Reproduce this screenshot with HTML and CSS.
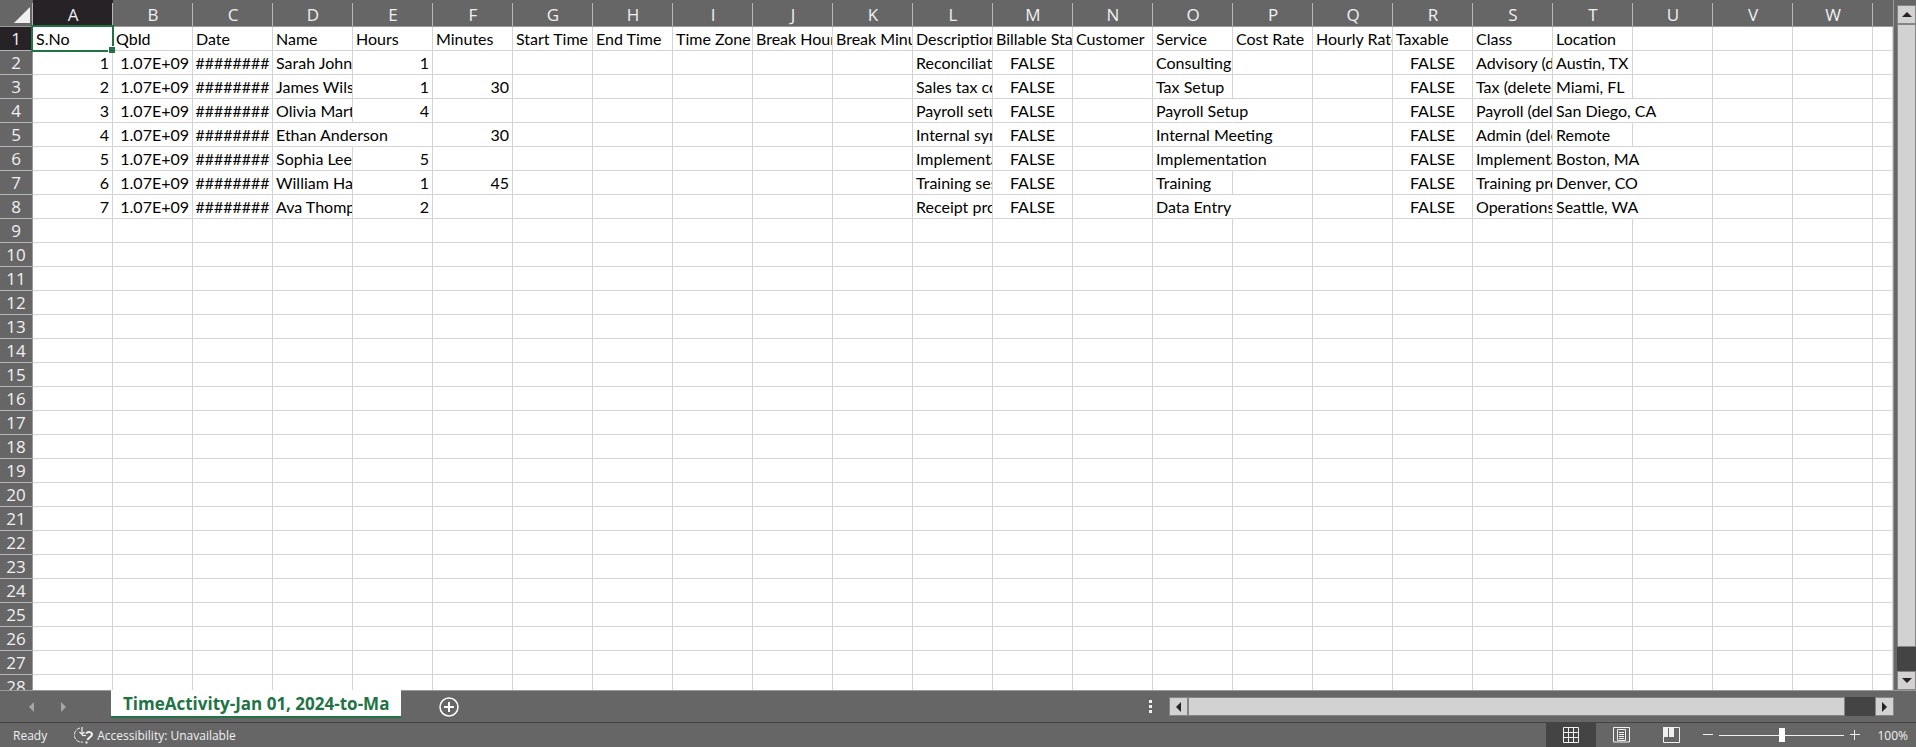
FILE: index.html
```html
<!DOCTYPE html>
<html lang="en">
<head>
  <meta charset="UTF-8">
  <meta name="viewport" content="width=device-width, initial-scale=1.0">
  <title>TimeActivity</title>
  <link rel="stylesheet" href="styles.css">
</head>
<body>
  <!-- Sheet -->
  <main class="workspace">
    <div class="grid">
      <table class="sheet">
        <colgroup id="columns"></colgroup>
        <thead>
          <tr id="letters"></tr>
        </thead>
        <tbody id="rows"></tbody>
      </table>
    </div>
    <div class="vscroll">
      <button class="scroll-btn" aria-label="Scroll up">
        <svg width="10" height="6" viewBox="0 0 10 6"><path d="M5 0L10 5H0z"/></svg>
      </button>
      <div class="vthumb"></div>
      <div class="vtrack"></div>
      <button class="scroll-btn" aria-label="Scroll down">
        <svg width="10" height="6" viewBox="0 0 10 6"><path d="M0 0H10L5 5z"/></svg>
      </button>
    </div>
  </main>

  <!-- Sheet tabs -->
  <nav class="tabs">
    <div class="tab-nav">
      <button class="nav-btn" aria-label="Previous sheet">
        <svg width="6" height="10" viewBox="0 0 6 10"><path d="M5 0V10L0 5z"/></svg>
      </button>
      <button class="nav-btn" aria-label="Next sheet">
        <svg width="6" height="10" viewBox="0 0 6 10"><path d="M0 0V10L5 5z"/></svg>
      </button>
    </div>
    <button class="tab">TimeActivity-Jan 01, 2024-to-Ma</button>
    <button class="add-btn" aria-label="New sheet">
      <svg width="20" height="20" viewBox="0 0 20 20" fill="none" stroke="#fff">
        <circle cx="10" cy="10" r="9" stroke-width="1.5"/>
        <path d="M10 5V15M5 10H15" stroke-width="2"/>
      </svg>
    </button>
    <div class="hscroll-area">
      <svg width="3" height="13" viewBox="0 0 3 13" fill="#f0f0f0"><path d="M0 0h3v3H0zM0 5h3v3H0zM0 10h3v3H0z"/></svg>
      <div class="hscroll">
        <button class="scroll-btn" aria-label="Scroll left">
          <svg width="6" height="10" viewBox="0 0 6 10"><path d="M5 0V10L0 5z"/></svg>
        </button>
        <div class="hthumb"></div>
        <div class="htrack"></div>
        <button class="scroll-btn" aria-label="Scroll right">
          <svg width="6" height="10" viewBox="0 0 6 10"><path d="M0 0V10L5 5z"/></svg>
        </button>
      </div>
    </div>
  </nav>

  <!-- Status bar -->
  <footer class="status">
    <span>Ready</span>
    <button class="access">
      <svg width="20" height="18" viewBox="0 0 20 18" fill="none" stroke="#f0f0f0">
        <path d="M6 2A7 7 0 0 0 9 16" stroke-dasharray="4 1"/>
        <path d="M8 1v7M5.500 6L8 8.500 10.500 6" stroke-width="1.200"/>
        <path d="M8 9.500h4" stroke-width="1.200"/>
        <path d="M12 7.500C14 5 18 6 18 8.500 18 11 14.500 11 13.500 14" stroke-width="2"/>
        <path d="M12.500 15.500v2" stroke-width="2"/>
      </svg>
      Accessibility: Unavailable
    </button>
    <div class="views">
      <button class="view active" aria-label="Normal">
        <svg width="16" height="16" viewBox="0 0 16 16" fill="none" stroke="#f0f0f0"><path d="M.5.5h15v15H.5zM5.5 0v16M10.5 0v16M0 5.5h16M0 10.5h16"/></svg>
      </button>
      <button class="view" aria-label="Page layout">
        <svg width="17" height="16" viewBox="0 0 17 16" fill="none" stroke="#f0f0f0"><path d="M.5.5h16v14.500H.5zM4.500 2.500h8v11h-8zM6 5.500h5M6 7.500h5M6 9.500h5M6 11.500h5"/></svg>
      </button>
      <button class="view" aria-label="Page break preview">
        <svg width="17" height="16" viewBox="0 0 17 16" fill="none" stroke="#f0f0f0"><path d="M.5.5h16v15H.5z"/><path d="M0 0h5v10H0zM6 0h5v10H6z" fill="#f0f0f0" stroke="none"/></svg>
      </button>
    </div>
    <div class="zoom">
      <button class="zoom-btn" aria-label="Zoom out">
        <svg width="10" height="10" viewBox="0 0 10 10" stroke="#f0f0f0"><path d="M0 4.500h10"/></svg>
      </button>
      <input class="slider" type="range" min="0" max="200" value="100" aria-label="Zoom">
      <button class="zoom-btn" aria-label="Zoom in">
        <svg width="10" height="10" viewBox="0 0 10 10" stroke="#f0f0f0"><path d="M0 4.500h10M4.500 0v10"/></svg>
      </button>
      <span class="percent">100%</span>
    </div>
  </footer>

  <script src="script.js"></script>
</body>
</html>
```
FILE: styles.css
```css
* {
  box-sizing: border-box;
}
body {
  display: flex;
  flex-direction: column;
  margin: 0;
  height: 100vh;
  overflow: hidden;
  background-color: #666;
  color: #f0f0f0;
  font-family: "Open Sans", "Noto Sans", sans-serif;
}
button {
  display: flex;
  align-items: center;
  justify-content: center;
  margin: 0;
  padding: 0;
  border: none;
  background: none;
  color: inherit;
  font: inherit;
}
.workspace {
  display: flex;
  flex: 1;
  min-height: 0;
}

/* Grid */
.grid {
  flex: 1;
  overflow: hidden;
  border-right: 1px solid #999;
}
.sheet {
  table-layout: fixed;
  width: 100%;
  border-collapse: separate;
  border-spacing: 0;
}
.col-num {
  width: 33px;
}
.col {
  width: 80px;
}
.sheet th {
  padding: 0;
  overflow: hidden;
  background-color: #666;
  font-size: 17px;
  font-weight: 400;
  line-height: 23px;
  text-align: center;
}
.sheet thead th {
  height: 27px;
  padding-top: 3px;
  border-bottom: 1px solid #999;
  background-image: linear-gradient(#b5b5b5, #b5b5b5);
  background-position: right 3px;
  background-size: 1px 100%;
  background-repeat: no-repeat;
}
.sheet thead th:last-child {
  background-image: none;
}
.sheet thead .corner {
  padding: 0 3px 3px 0;
  vertical-align: bottom;
}
.corner svg {
  display: block;
  margin-left: auto;
}
.sheet tbody th {
  height: 24px;
  border-right: 1px solid #999;
  border-bottom: 1px solid #b5b5b5;
}
.sheet thead th.current,
.sheet tbody th.current {
  background-color: #262226;
}
.sheet td {
  height: 24px;
  padding: 0 3px;
  overflow: hidden;
  border-right: 1px solid #d4d4d4;
  border-bottom: 1px solid #d4d4d4;
  color: #000;
  font-family: Lato, "Open Sans", sans-serif;
  font-size: 16px;
  line-height: 23px;
  white-space: nowrap;
}
.sheet tbody {
  background-color: #fff;
}
.sheet td.number {
  text-align: right;
}
.sheet td.flag {
  text-align: center;
}
.sheet td.hash {
  padding: 0;
  text-align: center;
}
.sheet td.spill {
  overflow: visible;
  border-right-color: transparent;
}
.sheet td.selected {
  position: relative;
  overflow: visible;
}
.selected::before {
  content: "";
  position: absolute;
  inset: -2px;
  border: 2px solid #217346;
}
.selected::after {
  content: "";
  position: absolute;
  right: -3px;
  bottom: -3px;
  width: 6px;
  height: 6px;
  border-top: 1px solid #fff;
  border-left: 1px solid #fff;
  background-color: #217346;
}

/* Scroll bars */
.scroll-btn {
  flex: none;
  width: 19px;
  height: 19px;
  border: 1px solid #858585;
  background-color: #d2d2d2;
  fill: #262226;
}
.vscroll {
  display: flex;
  flex-direction: column;
  margin-left: 3px;
  padding-top: 5px;
}
.vthumb {
  flex: 1;
  border: 1px solid #858585;
  background-color: #d2d2d2;
}
.vtrack {
  height: 24px;
  background-color: #444;
}
.hscroll {
  display: flex;
  flex: 1;
}
.hthumb {
  flex: 1;
  border: 1px solid #858585;
  background-color: #d2d2d2;
}
.htrack {
  width: 30px;
  background-color: #444;
}

/* Sheet tabs */
.tabs {
  display: flex;
  align-items: flex-start;
  height: 32px;
  border-top: 1px solid #999;
}
.tab-nav {
  display: flex;
  gap: 26px;
  width: 111px;
  padding: 11px 0 0 29px;
}
.nav-btn {
  height: 10px;
  fill: #a6a6a6;
}
.tab {
  height: 28px;
  margin-top: -1px;
  padding: 0 12px;
  border-bottom: 2px solid #217346;
  background-color: #fff;
  color: #217346;
  font-size: 17px;
  font-weight: 700;
}
.add-btn {
  margin: 6px 0 0 38px;
}
.hscroll-area {
  display: flex;
  align-items: center;
  gap: 17px;
  width: 745px;
  margin: 6px 22px 0 auto;
}

/* Status bar */
.status {
  display: flex;
  align-items: center;
  height: 25px;
  padding-left: 13px;
  border-top: 1px solid #444;
  font-size: 12px;
}
.access {
  gap: 3px;
  margin-left: 27px;
}
.views {
  display: flex;
  height: 100%;
  margin-left: auto;
}
.view {
  width: 50px;
  height: 100%;
}
.view.active {
  background-color: #444;
}
.zoom {
  display: flex;
  align-items: center;
  padding: 0 8px 0 7px;
}
.slider {
  appearance: none;
  width: 125px;
  height: 14px;
  margin: 0 6px;
  background: linear-gradient(#f0f0f0, #f0f0f0) center / 100% 1px no-repeat;
}
.slider::-webkit-slider-thumb {
  appearance: none;
  width: 6px;
  height: 14px;
  background-color: #fff;
}
.percent {
  margin-left: 17px;
}
```
FILE: script.js
```javascript
const letters = 'ABCDEFGHIJKLMNOPQRSTUVW'.split('');
const rowCount = 28;

const titles = ['S.No', 'QbId', 'Date', 'Name', 'Hours', 'Minutes', 'Start Time', 'End Time',
  'Time Zone', 'Break Hours', 'Break Minutes', 'Description', 'Billable Status', 'Customer',
  'Service', 'Cost Rate', 'Hourly Rate', 'Taxable', 'Class', 'Location'];

// name, hours, minutes, description, service, class, location
const entries = [
  ['Sarah Johnson', 1, '', 'Reconciliation', 'Consulting', 'Advisory (deleted)', 'Austin, TX'],
  ['James Wilson', 1, 30, 'Sales tax config', 'Tax Setup', 'Tax (deleted)', 'Miami, FL'],
  ['Olivia Martin', 4, '', 'Payroll setup', 'Payroll Setup', 'Payroll (deleted)', 'San Diego, CA'],
  ['Ethan Anderson', '', 30, 'Internal sync', 'Internal Meeting', 'Admin (deleted)', 'Remote'],
  ['Sophia Lee', 5, '', 'Implementation', 'Implementation', 'Implementation', 'Boston, MA'],
  ['William Harris', 1, 45, 'Training session', 'Training', 'Training program', 'Denver, CO'],
  ['Ava Thompson', 2, '', 'Receipt processing', 'Data Entry', 'Operations', 'Seattle, WA']
];

// Cells whose text runs on over the empty neighbour
const spills = ['O4', 'T4', 'D5', 'O5', 'O6', 'T6', 'T7', 'O8', 'T8'];

const sheet = [titles];
entries.forEach((e, i) => {
  sheet.push([i + 1, '1.07E+09', '########', e[0], e[1], e[2], '', '', '', '', '', e[3],
    'FALSE', '', e[4], '', '', 'FALSE', e[5], e[6]]);
});

// Choose the class of a cell from its position and value
function cellClass(row, col, value) {
  const name = letters[col] + row;
  if (name === 'A1') return 'selected';
  if (spills.includes(name)) return 'spill';
  if (value === 'FALSE') return 'flag';
  if (value === '########') return 'hash';
  if (typeof value === 'number' || value === '1.07E+09') return 'number';
  return '';
}

// Column widths and letters
document.getElementById('columns').innerHTML =
  '<col class="col-num">' + letters.map(() => '<col class="col">').join('') + '<col>';

document.getElementById('letters').innerHTML =
  '<th class="corner"><svg width="16" height="16" viewBox="0 0 16 16"><path d="M16 0V16H0z" fill="#f0f0f0"/></svg></th>' +
  letters.map(l => `<th scope="col" class="${l === 'A' ? 'current' : ''}">${l}</th>`).join('') + '<th></th>';

// Rows
let html = '';
for (let r = 1; r <= rowCount; r++) {
  html += `<tr><th scope="row" class="${r === 1 ? 'current' : ''}">${r}</th>`;
  for (let c = 0; c <= letters.length; c++) {
    const value = (sheet[r - 1] || [])[c] ?? '';
    html += `<td class="${cellClass(r, c, value)}">${value}</td>`;
  }
  html += '</tr>';
}
document.getElementById('rows').innerHTML = html;
```
